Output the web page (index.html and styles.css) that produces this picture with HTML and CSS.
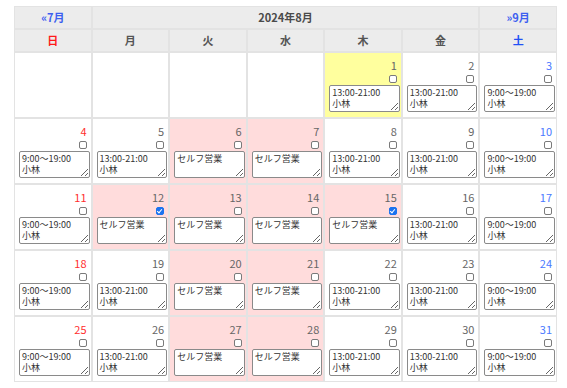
FILE: index.html
```html
<!DOCTYPE html>
<html lang="ja">
<head>
<meta charset="utf-8">
<title>2024年8月</title>
<link rel="stylesheet" href="styles.css">
</head>
<body>
<div class="wrap">
<table class="cal">
  <thead>
    <tr class="nav">
      <th class="link">«7月</th>
      <th colspan="5" class="title">2024年8月</th>
      <th class="link">»9月</th>
    </tr>
    <tr class="wd">
      <th class="sun">日</th><th>月</th><th>火</th><th>水</th><th>木</th><th>金</th><th class="sat">土</th>
    </tr>
  </thead>
  <tbody>
    <tr>
      <td></td><td></td><td></td><td></td>
      <td class="today"><div class="num">1</div><input type="checkbox" class="chk"><textarea class="memo">13:00-21:00
小林</textarea></td>
      <td><div class="num">2</div><input type="checkbox" class="chk"><textarea class="memo">13:00-21:00
小林</textarea></td>
      <td><div class="num sat">3</div><input type="checkbox" class="chk"><textarea class="memo">9:00～19:00
小林</textarea></td>
    </tr>
    <tr>
      <td><div class="num sun">4</div><input type="checkbox" class="chk"><textarea class="memo">9:00～19:00
小林</textarea></td>
      <td><div class="num">5</div><input type="checkbox" class="chk"><textarea class="memo">13:00-21:00
小林</textarea></td>
      <td class="off"><div class="num">6</div><input type="checkbox" class="chk"><textarea class="memo">セルフ営業</textarea></td>
      <td class="off"><div class="num">7</div><input type="checkbox" class="chk"><textarea class="memo">セルフ営業</textarea></td>
      <td><div class="num">8</div><input type="checkbox" class="chk"><textarea class="memo">13:00-21:00
小林</textarea></td>
      <td><div class="num">9</div><input type="checkbox" class="chk"><textarea class="memo">13:00-21:00
小林</textarea></td>
      <td><div class="num sat">10</div><input type="checkbox" class="chk"><textarea class="memo">9:00～19:00
小林</textarea></td>
    </tr>
    <tr>
      <td><div class="num sun">11</div><input type="checkbox" class="chk"><textarea class="memo">9:00～19:00
小林</textarea></td>
      <td class="off"><div class="num">12</div><input type="checkbox" class="chk" checked><textarea class="memo">セルフ営業</textarea></td>
      <td class="off"><div class="num">13</div><input type="checkbox" class="chk"><textarea class="memo">セルフ営業</textarea></td>
      <td class="off"><div class="num">14</div><input type="checkbox" class="chk"><textarea class="memo">セルフ営業</textarea></td>
      <td class="off"><div class="num">15</div><input type="checkbox" class="chk" checked><textarea class="memo">セルフ営業</textarea></td>
      <td><div class="num">16</div><input type="checkbox" class="chk"><textarea class="memo">13:00-21:00
小林</textarea></td>
      <td><div class="num sat">17</div><input type="checkbox" class="chk"><textarea class="memo">9:00～19:00
小林</textarea></td>
    </tr>
    <tr>
      <td><div class="num sun">18</div><input type="checkbox" class="chk"><textarea class="memo">9:00～19:00
小林</textarea></td>
      <td><div class="num">19</div><input type="checkbox" class="chk"><textarea class="memo">13:00-21:00
小林</textarea></td>
      <td class="off"><div class="num">20</div><input type="checkbox" class="chk"><textarea class="memo">セルフ営業</textarea></td>
      <td class="off"><div class="num">21</div><input type="checkbox" class="chk"><textarea class="memo">セルフ営業</textarea></td>
      <td><div class="num">22</div><input type="checkbox" class="chk"><textarea class="memo">13:00-21:00
小林</textarea></td>
      <td><div class="num">23</div><input type="checkbox" class="chk"><textarea class="memo">13:00-21:00
小林</textarea></td>
      <td><div class="num sat">24</div><input type="checkbox" class="chk"><textarea class="memo">9:00～19:00
小林</textarea></td>
    </tr>
    <tr>
      <td><div class="num sun">25</div><input type="checkbox" class="chk"><textarea class="memo">9:00～19:00
小林</textarea></td>
      <td><div class="num">26</div><input type="checkbox" class="chk"><textarea class="memo">13:00-21:00
小林</textarea></td>
      <td class="off"><div class="num">27</div><input type="checkbox" class="chk"><textarea class="memo">セルフ営業</textarea></td>
      <td class="off"><div class="num">28</div><input type="checkbox" class="chk"><textarea class="memo">セルフ営業</textarea></td>
      <td><div class="num">29</div><input type="checkbox" class="chk"><textarea class="memo">13:00-21:00
小林</textarea></td>
      <td><div class="num">30</div><input type="checkbox" class="chk"><textarea class="memo">13:00-21:00
小林</textarea></td>
      <td><div class="num sat">31</div><input type="checkbox" class="chk"><textarea class="memo">9:00～19:00
小林</textarea></td>
    </tr>
  </tbody>
</table>
</div>
</body>
</html>
```
FILE: styles.css
```css
html, body {
  margin: 0;
  padding: 0;
  background: #ffffff;
}
body {
  font-family: "Noto Sans CJK JP", "Noto Sans", sans-serif;
  color: #555555;
}
.wrap {
  padding: 6px 0 0 14px;
}
.cal {
  width: 543px;
  table-layout: fixed;
  border-collapse: separate;
  border-spacing: 0;
}
.cal th,
.cal td {
  border: 1px solid #e3e3e3;
  padding: 0;
}
.cal th {
  background: #ececec;
  font-size: 11px;
  font-weight: bold;
  line-height: 13px;
  text-align: center;
  vertical-align: middle;
  color: #555555;
}
.nav, .wd {
  height: 23px;
}
.cal th.link {
  color: #3d5ff0;
}
.cal th.title {
  color: #4a4a4a;
}
.cal th.sun { color: #ff1a1a; }
.cal th.sat { color: #2251f5; }

.cal tbody tr {
  height: 66px;
}
.cal td {
  vertical-align: top;
  padding: 0 1px 0 4px;
  background: #ffffff;
  text-align: right;
}
.cal td.off { background: #ffdcdc; }
.cal td.today { background: #ffff9e; }

.num {
  margin-top: 5px;
  padding-right: 3px;
  font-size: 11px;
  line-height: 14px;
  color: #666666;
}
.num.sun { color: #ff2d2d; }
.num.sat { color: #4a78ff; }

.chk {
  appearance: none;
  -webkit-appearance: none;
  display: block;
  box-sizing: border-box;
  width: 8px;
  height: 8px;
  margin: 3px 3px 0 auto;
  border: 1px solid #7a7a7a;
  border-radius: 2px;
  background: #ffffff;
  position: relative;
}
.chk:checked {
  background: #1a73f0;
  border-color: #1a73f0;
}
.chk:checked::after {
  content: "";
  position: absolute;
  left: 1px;
  top: 0;
  width: 2px;
  height: 4px;
  border: solid #ffffff;
  border-width: 0 1px 1px 0;
  transform: rotate(40deg);
}
.memo {
  display: block;
  box-sizing: border-box;
  width: 100%;
  height: 27px;
  margin: 2px 0 0 0;
  padding: 1px 2px;
  border: 1px solid #8a8a8a;
  border-radius: 2px;
  background: #ffffff;
  font-family: "Noto Sans CJK JP", "Noto Sans", sans-serif;
  font-size: 9px;
  line-height: 11px;
  color: #333333;
  text-align: left;
  overflow: hidden;
  resize: both;
}
```
